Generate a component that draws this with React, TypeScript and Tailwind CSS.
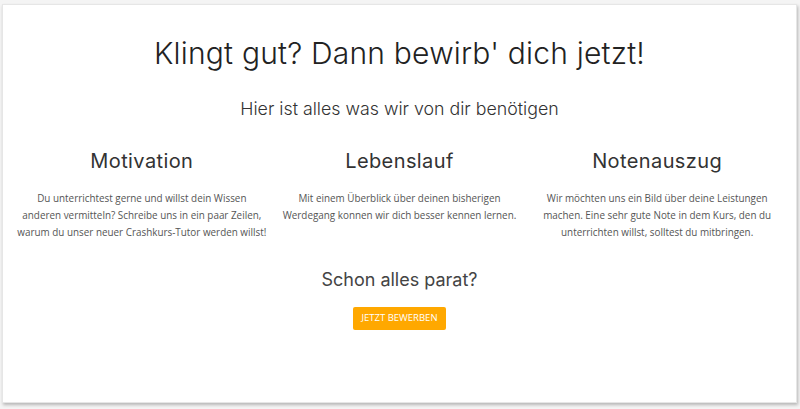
import React from "react";

const cols = [
  {
    title: "Motivation",
    lines: [
      "Du unterrichtest gerne und willst dein Wissen",
      "anderen vermitteln? Schreibe uns in ein paar Zeilen,",
      "warum du unser neuer Crashkurs-Tutor werden willst!",
    ],
  },
  {
    title: "Lebenslauf",
    lines: [
      "Mit einem Überblick über deinen bisherigen",
      "Werdegang konnen wir dich besser kennen lernen.",
    ],
  },
  {
    title: "Notenauszug",
    lines: [
      "Wir möchten uns ein Bild über deine Leistungen",
      "machen. Eine sehr gute Note in dem Kurs, den du",
      "unterrichten willst, solltest du mitbringen.",
    ],
  },
];

export default function App() {
  return (
    <div className="w-[800px] h-[409px] bg-[#f4f4f4] pt-[4px] pl-[2px] pr-[3px] pb-[6px]">
      <div className="h-full bg-white shadow-[1px_2px_3px_rgba(0,0,0,0.25)] border border-[#e6e6e6] flex flex-col items-center px-[10px] font-['Inter','Noto_Sans',sans-serif]">
        <h1 className="mt-[28px] text-[30px] leading-[40px] font-light text-[#222] tracking-[0.2px]">
          Klingt gut? Dann bewirb' dich jetzt!
        </h1>
        <h2 className="mt-[24px] text-[17.8px] leading-[24px] font-light text-[#333]">
          Hier ist alles was wir von dir benötigen
        </h2>
        <div className="mt-[26px] w-full grid grid-cols-3">
          {cols.map((c) => (
            <div key={c.title} className="flex flex-col items-center">
              <h3 className="text-[20px] leading-[28px] font-normal text-[#333] tracking-[0.4px]">
                {c.title}
              </h3>
              <p className="mt-[15px] text-[9.9px] leading-[17px] text-[#555] text-center whitespace-nowrap font-['Open_Sans',sans-serif]">
                {c.lines.map((l, i) => (
                  <React.Fragment key={i}>
                    {l}
                    {i < c.lines.length - 1 && <br />}
                  </React.Fragment>
                ))}
              </p>
            </div>
          ))}
        </div>
        <h3 className="mt-[27px] text-[18px] leading-[24px] font-normal text-[#444]">
          Schon alles parat?
        </h3>
        <button className="mt-[15px] h-[23px] w-[93px] bg-[#ffa800] rounded-[2px] text-white text-[9.5px] uppercase flex items-center justify-center font-['Open_Sans',sans-serif]">
          Jetzt bewerben
        </button>
      </div>
    </div>
  );
}
